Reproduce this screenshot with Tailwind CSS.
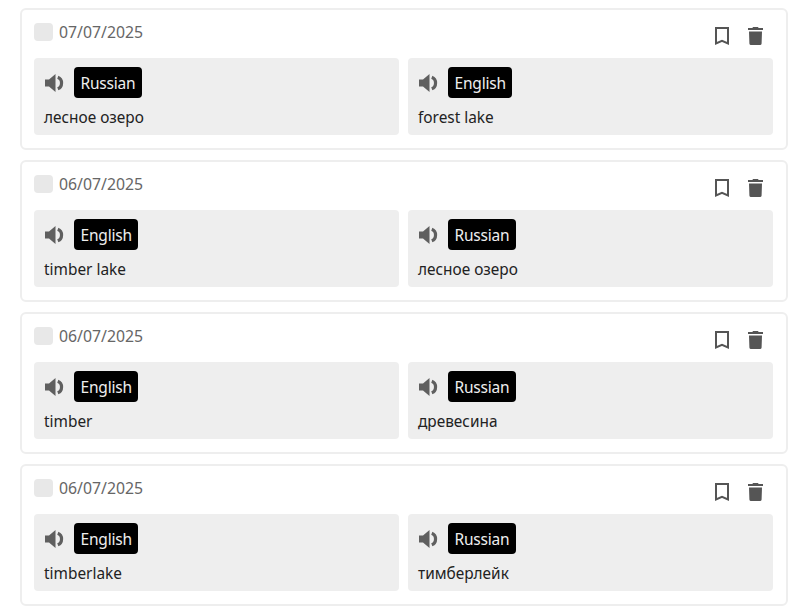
<!DOCTYPE html>
<html lang="en">
<head>
  <meta charset="UTF-8">
  <title>History</title>
  <script src="https://cdn.jsdelivr.net/npm/@tailwindcss/browser@4"></script>
</head>
<body class="bg-white font-['Noto_Sans',sans-serif] text-[16px] text-[#222] overflow-hidden">
  <svg class="hidden">
    <symbol id="speaker" viewBox="0 0 19 18"><path d="M0 5.500h4L10.500 0v18L4 12.500H0z" fill="#5f5f5f"/><path d="M12.800 3.200c5 1.900 5 9.700 0 11.600" fill="none" stroke="#5f5f5f" stroke-width="3.200"/></symbol>
    <symbol id="bookmark" viewBox="0 0 14 18"><path d="M1 1h12v15.400l-6-2.600-6 2.600z" fill="none" stroke="#555" stroke-width="2"/></symbol>
    <symbol id="trash" viewBox="0 0 15 18"><path d="M5 0h5l.6 1H15v2H0V1h4.400zM1 4.500h13l-.4 12A1.500 1.500 0 0 1 12 18H3a1.500 1.500 0 0 1-1.600-1.500z" fill="#555"/></symbol>
  </svg>

  <div class="ml-5 w-[768px] pt-2 flex flex-col gap-2.5">

    <!-- card 1 -->
    <div class="h-[142px] border-2 border-[#eee] rounded-md pl-3 pr-[13px] bg-white">
      <div class="h-12 flex items-start justify-between">
        <div class="flex items-center gap-1.5 pt-2.5 text-[#666]"><span class="w-[19px] h-[18px] rounded bg-[#e8e8e8]"></span><span class="leading-[24px] text-[15.8px]">07/07/2025</span></div>
        <div class="flex gap-[19px] pt-[17px] pr-[10px]"><svg class="w-3.5 h-[18px]"><use href="#bookmark"/></svg><svg class="w-[15px] h-[18px]"><use href="#trash"/></svg></div>
      </div>
      <div class="grid grid-cols-2 gap-[9px]">
        <div class="h-[77px] bg-[#eee] rounded px-2.5 pt-[9px]">
          <div class="flex items-center gap-[10px] h-[31px] pl-px"><svg class="w-[19px] h-[18px]"><use href="#speaker"/></svg><span class="bg-black text-[#eee] rounded px-[6.5px] h-[31px] text-[15.5px] tracking-[-0.2px] leading-[32px]">Russian</span></div>
          <p class="mt-[8px] leading-[24px] text-[15.4px]">лесное озеро</p>
        </div>
        <div class="h-[77px] bg-[#eee] rounded px-2.5 pt-[9px]">
          <div class="flex items-center gap-[10px] h-[31px] pl-px"><svg class="w-[19px] h-[18px]"><use href="#speaker"/></svg><span class="bg-black text-[#eee] rounded px-[6.5px] h-[31px] text-[15.5px] tracking-[-0.2px] leading-[32px]">English</span></div>
          <p class="mt-[8px] leading-[24px] text-[15.4px]">forest lake</p>
        </div>
      </div>
    </div>

    <!-- card 2 -->
    <div class="h-[142px] border-2 border-[#eee] rounded-md pl-3 pr-[13px] bg-white">
      <div class="h-12 flex items-start justify-between">
        <div class="flex items-center gap-1.5 pt-2.5 text-[#666]"><span class="w-[19px] h-[18px] rounded bg-[#e8e8e8]"></span><span class="leading-[24px] text-[15.8px]">06/07/2025</span></div>
        <div class="flex gap-[19px] pt-[17px] pr-[10px]"><svg class="w-3.5 h-[18px]"><use href="#bookmark"/></svg><svg class="w-[15px] h-[18px]"><use href="#trash"/></svg></div>
      </div>
      <div class="grid grid-cols-2 gap-[9px]">
        <div class="h-[77px] bg-[#eee] rounded px-2.5 pt-[9px]">
          <div class="flex items-center gap-[10px] h-[31px] pl-px"><svg class="w-[19px] h-[18px]"><use href="#speaker"/></svg><span class="bg-black text-[#eee] rounded px-[6.5px] h-[31px] text-[15.5px] tracking-[-0.2px] leading-[32px]">English</span></div>
          <p class="mt-[8px] leading-[24px] text-[15.4px]">timber lake</p>
        </div>
        <div class="h-[77px] bg-[#eee] rounded px-2.5 pt-[9px]">
          <div class="flex items-center gap-[10px] h-[31px] pl-px"><svg class="w-[19px] h-[18px]"><use href="#speaker"/></svg><span class="bg-black text-[#eee] rounded px-[6.5px] h-[31px] text-[15.5px] tracking-[-0.2px] leading-[32px]">Russian</span></div>
          <p class="mt-[8px] leading-[24px] text-[15.4px]">лесное озеро</p>
        </div>
      </div>
    </div>

    <!-- card 3 -->
    <div class="h-[142px] border-2 border-[#eee] rounded-md pl-3 pr-[13px] bg-white">
      <div class="h-12 flex items-start justify-between">
        <div class="flex items-center gap-1.5 pt-2.5 text-[#666]"><span class="w-[19px] h-[18px] rounded bg-[#e8e8e8]"></span><span class="leading-[24px] text-[15.8px]">06/07/2025</span></div>
        <div class="flex gap-[19px] pt-[17px] pr-[10px]"><svg class="w-3.5 h-[18px]"><use href="#bookmark"/></svg><svg class="w-[15px] h-[18px]"><use href="#trash"/></svg></div>
      </div>
      <div class="grid grid-cols-2 gap-[9px]">
        <div class="h-[77px] bg-[#eee] rounded px-2.5 pt-[9px]">
          <div class="flex items-center gap-[10px] h-[31px] pl-px"><svg class="w-[19px] h-[18px]"><use href="#speaker"/></svg><span class="bg-black text-[#eee] rounded px-[6.5px] h-[31px] text-[15.5px] tracking-[-0.2px] leading-[32px]">English</span></div>
          <p class="mt-[8px] leading-[24px] text-[15.4px]">timber</p>
        </div>
        <div class="h-[77px] bg-[#eee] rounded px-2.5 pt-[9px]">
          <div class="flex items-center gap-[10px] h-[31px] pl-px"><svg class="w-[19px] h-[18px]"><use href="#speaker"/></svg><span class="bg-black text-[#eee] rounded px-[6.5px] h-[31px] text-[15.5px] tracking-[-0.2px] leading-[32px]">Russian</span></div>
          <p class="mt-[8px] leading-[24px] text-[15.4px]">древесина</p>
        </div>
      </div>
    </div>

    <!-- card 4 -->
    <div class="h-[142px] border-2 border-[#eee] rounded-md pl-3 pr-[13px] bg-white">
      <div class="h-12 flex items-start justify-between">
        <div class="flex items-center gap-1.5 pt-2.5 text-[#666]"><span class="w-[19px] h-[18px] rounded bg-[#e8e8e8]"></span><span class="leading-[24px] text-[15.8px]">06/07/2025</span></div>
        <div class="flex gap-[19px] pt-[17px] pr-[10px]"><svg class="w-3.5 h-[18px]"><use href="#bookmark"/></svg><svg class="w-[15px] h-[18px]"><use href="#trash"/></svg></div>
      </div>
      <div class="grid grid-cols-2 gap-[9px]">
        <div class="h-[77px] bg-[#eee] rounded px-2.5 pt-[9px]">
          <div class="flex items-center gap-[10px] h-[31px] pl-px"><svg class="w-[19px] h-[18px]"><use href="#speaker"/></svg><span class="bg-black text-[#eee] rounded px-[6.5px] h-[31px] text-[15.5px] tracking-[-0.2px] leading-[32px]">English</span></div>
          <p class="mt-[8px] leading-[24px] text-[15.4px]">timberlake</p>
        </div>
        <div class="h-[77px] bg-[#eee] rounded px-2.5 pt-[9px]">
          <div class="flex items-center gap-[10px] h-[31px] pl-px"><svg class="w-[19px] h-[18px]"><use href="#speaker"/></svg><span class="bg-black text-[#eee] rounded px-[6.5px] h-[31px] text-[15.5px] tracking-[-0.2px] leading-[32px]">Russian</span></div>
          <p class="mt-[8px] leading-[24px] text-[15.4px]">тимберлейк</p>
        </div>
      </div>
    </div>

  </div>
</body>
</html>
